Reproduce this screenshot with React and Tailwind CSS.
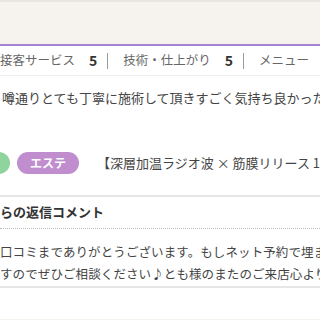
export default function App() {
  const jp = { fontFamily: '"Noto Sans CJK JP", "Noto Sans", sans-serif' };
  return (
    <div className="w-[320px] h-[320px] overflow-hidden bg-white text-[#555]" style={jp}>
      {/* 上部のクリーム色ヘッダー */}
      <div className="h-[44px] bg-[#f6f3ee] border-t-[2px] border-[#e9e6e1]" />
      <div className="h-[2px] bg-[#a383d2]" />

      {/* 評価 */}
      <div className="h-[30px] flex items-center whitespace-nowrap text-[12.5px] text-[#666] border-b border-[#eeeeee]">
        <span className="shrink-0">接客サービス</span>
        <span className="shrink-0 ml-[14px] font-bold text-[14px] text-[#333]">5</span>
        <span className="shrink-0 ml-[10px] w-px h-[16px] bg-[#999]" />
        <span className="shrink-0 ml-[15px]">技術・仕上がり</span>
        <span className="shrink-0 ml-[14px] font-bold text-[14px] text-[#333]">5</span>
        <span className="shrink-0 ml-[10px] w-px h-[16px] bg-[#999]" />
        <span className="shrink-0 ml-[15px]">メニュー</span>
      </div>

      {/* 口コミ本文 */}
      <p className="mt-[12px] pl-[2px] whitespace-nowrap text-[13px] text-[#444]">
        噂通りとても丁寧に施術して頂きすごく気持ち良かったです
      </p>

      {/* タグ */}
      <div className="mt-[44px] flex items-center whitespace-nowrap">
        <span className="shrink-0 -ml-[40px] w-[50px] h-[22px] rounded-full bg-[#8fd49d]" />
        <span className="shrink-0 ml-[7px] w-[62px] h-[22px] rounded-full bg-[#c08dcf] text-white text-[12px] font-bold flex items-center justify-center">
          エステ
        </span>
        <span className="shrink-0 ml-[18px] text-[13px] text-[#444]">【深層加温ラジオ波 × 筋膜リリース 100分】</span>
      </div>

      <div className="mt-[21px] h-[2px] bg-[#e6e6e6]" />

      {/* 返信 */}
      <div className="h-[32px] flex items-center whitespace-nowrap text-[13px] font-bold text-[#333] border-b border-dotted border-[#bbb]">
        <span className="shrink-0 -ml-[52px]">サロンからの返信コメント</span>
      </div>
      <div className="pt-[12px] whitespace-nowrap text-[12.5px] leading-[22px] text-[#444] tracking-[0.1px]">
        <p>口コミまでありがとうございます。もしネット予約で埋まっていても</p>
        <p>すのでぜひご相談ください♪とも様のまたのご来店心よりお待ちしております</p>
      </div>
      <div className="mt-[1px] h-[2px] bg-[#e6e6e6]" />
      <div className="h-[31px]" />
      <div className="h-[10px] bg-[#f6f3ee]" />
    </div>
  );
}
